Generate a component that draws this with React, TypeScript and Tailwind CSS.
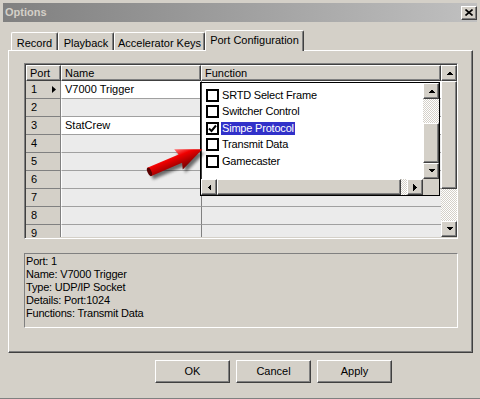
import React from 'react'

const raised =
  'border border-t-white border-l-white border-r-[#404040] border-b-[#404040] bg-[#d4d0c8] shadow-[inset_-1px_-1px_#808080]'
const dither = 'bg-[image:repeating-conic-gradient(#ffffff_0%_25%,#d4d0c8_0%_50%)] bg-[length:2px_2px]'

type Dir = 'up' | 'down' | 'left' | 'right'

function Tri({ dir }: { dir: Dir }) {
  if (dir === 'up' || dir === 'down') {
    return (
      <svg width="7" height="4" viewBox="0 0 7 4" shapeRendering="crispEdges">
        <polygon points={dir === 'up' ? '0,4 7,4 3.5,0.5' : '0,0 7,0 3.5,3.5'} fill="#000" />
      </svg>
    )
  }
  return (
    <svg width="4" height="7" viewBox="0 0 4 7" shapeRendering="crispEdges">
      <polygon points={dir === 'left' ? '4,0 4,7 0.5,3.5' : '0,0 0,7 3.5,3.5'} fill="#000" />
    </svg>
  )
}

function ScrollBtn({ dir }: { dir: Dir }) {
  return (
    <div className={`flex h-[16px] w-[16px] shrink-0 items-center justify-center ${raised}`}>
      <Tri dir={dir} />
    </div>
  )
}

function Check({ checked }: { checked?: boolean }) {
  return (
    <div className="flex h-[13px] w-[13px] shrink-0 items-center justify-center border-2 border-black bg-white">
      {checked && (
        <svg width="9" height="9" viewBox="0 0 9 9">
          <path d="M1 4.5 L3.5 7 L8 1.5" fill="none" stroke="#000" strokeWidth="2" />
        </svg>
      )}
    </div>
  )
}

const ports = [
  { n: 1, name: 'V7000 Trigger', set: true, current: true },
  { n: 2, name: '' },
  { n: 3, name: 'StatCrew', set: true },
  { n: 4, name: '' },
  { n: 5, name: '' },
  { n: 6, name: '' },
  { n: 7, name: '' },
  { n: 8, name: '' },
  { n: 9, name: '' },
]

const functions = [
  { label: 'SRTD Select Frame' },
  { label: 'Switcher Control' },
  { label: 'Simpe Protocol', checked: true, selected: true },
  { label: 'Transmit Data' },
  { label: 'Gamecaster' },
]

const tabs = [
  { label: 'Record', w: 'w-[47px]' },
  { label: 'Playback', w: 'w-[56px]' },
  { label: 'Accelerator Keys', w: 'w-[91px]' },
  { label: 'Port Configuration', w: 'w-[99px]', active: true },
]

function PortGrid() {
  return (
    <div className="flex h-[176px] w-[434px] border border-t-[#808080] border-l-[#808080] border-r-white border-b-white shadow-[inset_1px_1px_#404040]">
      <div className="ml-px mt-px flex h-[172px] w-[415px] flex-col overflow-hidden">
        <div className="flex h-[16px] shrink-0">
          <div className={`flex w-[35px] items-center pl-[3px] ${raised}`}>Port</div>
          <div className={`flex w-[140px] items-center pl-[3px] ${raised}`}>Name</div>
          <div className={`flex w-[240px] items-center pl-[3px] ${raised}`}>Function</div>
        </div>
        {ports.map((p) => {
          const bg = p.set ? 'bg-white' : 'bg-[#ebebeb]'
          return (
            <div key={p.n} className="flex h-[18px] shrink-0">
              <div className="flex w-[35px] items-center justify-between border-b border-r border-[#808080] bg-[#d4d0c8] pl-[5px] pr-[4px]">
                <span>{p.n}</span>
                {p.current && (
                  <svg width="4" height="7" viewBox="0 0 4 7">
                    <polygon points="0,0 0,7 4,3.5" fill="#000" />
                  </svg>
                )}
              </div>
              <div className={`flex w-[140px] items-center border-b border-l border-b-[#a0a0a0] border-l-white pl-[3px] ${bg}`}>
                {p.name}
              </div>
              <div className={`w-[240px] border-b border-l border-[#a0a0a0] border-l-[#808080] ${bg}`} />
            </div>
          )
        })}
      </div>
      <div className="mt-px flex h-[172px] w-[16px] flex-col">
        <ScrollBtn dir="up" />
        <div className={`h-[108px] shrink-0 ${raised}`} />
        <div className={`h-[32px] shrink-0 ${dither}`} />
        <ScrollBtn dir="down" />
      </div>
    </div>
  )
}

function FunctionPopup() {
  return (
    <div className="absolute left-[200px] top-[82px] flex h-[114px] w-[240px] flex-col border border-black bg-white shadow-[inset_1px_0_#404040]">
      <div className="flex h-[96px]">
        <div className="flex w-[222px] flex-col pl-[5px] pt-[4px]">
          {functions.map((f) => (
            <div key={f.label} className="flex h-[16.5px] items-center gap-[2px]">
              <Check checked={f.checked} />
              <span
                className={`px-px leading-[13px] tracking-[-0.2px] ${f.selected ? 'bg-[#3131c9] text-white' : ''}`}
              >
                {f.label}
              </span>
            </div>
          ))}
        </div>
        <div className="flex w-[16px] flex-col">
          <ScrollBtn dir="up" />
          <div className={`h-[24px] shrink-0 ${dither}`} />
          <div className={`h-[40px] shrink-0 ${raised}`} />
          <ScrollBtn dir="down" />
        </div>
      </div>
      <div className="flex h-[16px]">
        <ScrollBtn dir="left" />
        <div className={`w-[184px] shrink-0 ${raised}`} />
        <div className={`w-[6px] shrink-0 ${dither}`} />
        <ScrollBtn dir="right" />
        <div className="w-[16px] bg-[#d4d0c8]" />
      </div>
    </div>
  )
}

function RedArrow() {
  return (
    <svg className="absolute left-[136px] top-[132px]" width="76" height="56" viewBox="0 0 76 56">
      <defs>
        <linearGradient id="arrowFill" x1="0" y1="-11" x2="0" y2="11" gradientUnits="userSpaceOnUse">
          <stop offset="0" stopColor="#ff7a7a" />
          <stop offset="0.35" stopColor="#f00000" />
          <stop offset="1" stopColor="#6e0000" />
        </linearGradient>
        <filter id="arrowShadow" x="-20%" y="-50%" width="140%" height="200%">
          <feGaussianBlur stdDeviation="1.6" />
        </filter>
      </defs>
      <g transform="translate(13 40) rotate(-23)">
        <polygon
          points="0,-4.5 34,-4.5 32,-11 58,0 32,11 34,4.5 0,4.5"
          fill="#000"
          opacity="0.55"
          transform="translate(1 4)"
          filter="url(#arrowShadow)"
        />
        <polygon points="0,-4.5 34,-4.5 32,-11 58,0 32,11 34,4.5 0,4.5" fill="url(#arrowFill)" />
        <ellipse cx="0.5" cy="0" rx="2" ry="4.5" fill="#5a0000" />
      </g>
    </svg>
  )
}

export default function App() {
  return (
    <div className="relative h-[399px] w-[480px] overflow-hidden bg-[#d4d0c8] font-['Liberation_Sans',Arial,sans-serif] text-[11px] leading-none text-black">
      <div className="flex h-full flex-col border-b border-[#808080] px-[3px] pt-[3px]">
        <div className="flex h-[19px] items-center justify-between bg-linear-to-r from-[#808080] to-[#c0c0c0] pl-[2px] pr-0">
          <span className="font-bold text-[#d4d0c8]">Options</span>
          <div className={`flex h-[14px] w-[16px] items-center justify-center ${raised}`}>
            <svg width="8" height="7" viewBox="0 0 8 7">
              <path d="M0.5 0.5 L7.5 6.5 M7.5 0.5 L0.5 6.5" stroke="#000" strokeWidth="1.6" />
            </svg>
          </div>
        </div>

        <div className="mt-[8px] flex h-[20px] items-end pl-[8px]">
          {tabs.map((t) =>
            t.active ? (
              <div
                key={t.label}
                className={`relative z-10 -mb-px flex h-[21px] ${t.w} items-start justify-center rounded-t-[2px] border-l border-t border-white border-r border-r-[#404040] bg-[#d4d0c8] pt-[4px] shadow-[inset_-1px_0_#808080]`}
              >
                {t.label}
              </div>
            ) : (
              <div
                key={t.label}
                className={`flex h-[18px] ${t.w} items-start justify-center rounded-t-[2px] border-l border-t border-white border-r border-r-[#404040] pt-[5px] shadow-[inset_-1px_0_#808080]`}
              >
                {t.label}
              </div>
            ),
          )}
        </div>

        <div className="ml-[5px] h-[303px] w-[465px] border border-t-white border-l-white border-r-[#404040] border-b-[#404040] pl-[15px] pt-[12px] shadow-[inset_-1px_-1px_#808080]">
          <PortGrid />
          <div className="mt-[14px] h-[75px] w-[434px] border border-t-[#808080] border-l-[#808080] border-r-white border-b-white pl-px pt-px leading-[13px] tracking-[-0.2px]">
            <div>Port: 1</div>
            <div>Name: V7000 Trigger</div>
            <div>Type: UDP/IP Socket</div>
            <div>Details: Port:1024</div>
            <div>Functions: Transmit Data</div>
          </div>
        </div>

        <div className="mt-[7px] flex gap-[6px] pl-[152px]">
          {['OK', 'Cancel', 'Apply'].map((b) => (
            <div key={b} className={`flex h-[23px] w-[75px] items-center justify-center ${raised}`}>
              {b}
            </div>
          ))}
        </div>
      </div>

      <FunctionPopup />
      <RedArrow />
    </div>
  )
}
